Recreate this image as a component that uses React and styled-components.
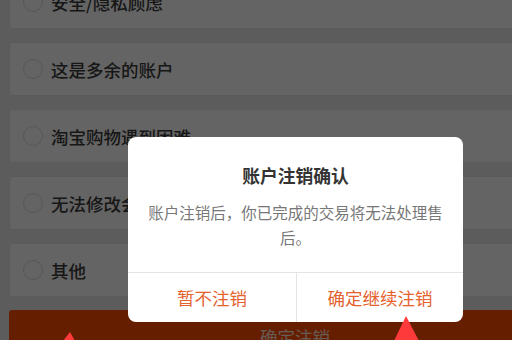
import React from "react";
import styled, { createGlobalStyle } from "styled-components";

const GlobalStyle = createGlobalStyle`
  html, body {
    margin: 0;
    padding: 0;
    width: 512px;
    height: 340px;
    overflow: hidden;
    background: #e6e6e6;
    font-family: "Noto Sans CJK SC", "Noto Sans", sans-serif;
  }
`;

const Page = styled.div`
  position: relative;
  width: 512px;
  height: 340px;
  overflow: hidden;
`;

const List = styled.div`
  display: flex;
  flex-direction: column;
  gap: 13px;
  width: 560px;
  margin-top: -25px;
  padding-left: 9px;
`;

const Card = styled.div`
  display: flex;
  align-items: center;
  gap: 8px;
  height: 54px;
  padding-left: 13px;
  background: #fafafa;
  border: 1px solid #e0e0e0;
  border-radius: 3px;
  box-sizing: border-box;
  font-size: 17.5px;
  font-weight: 500;
  color: #3a3a3a;
`;

const Radio = styled.span`
  width: 18px;
  height: 18px;
  border-radius: 50%;
  border: 1px solid #d8d8d8;
  flex-shrink: 0;
`;

const SubmitBar = styled.div`
  height: 50px;
  background: #ff4c00;
  border-radius: 3px;
  color: rgba(255, 255, 255, 0.85);
  font-size: 17.5px;
  display: flex;
  padding-top: 14px;
  padding-left: 251px;
  box-sizing: border-box;
`;

const Mask = styled.div`
  position: absolute;
  inset: 0;
  background: rgba(0, 0, 0, 0.6);
`;

const Dialog = styled.div`
  position: absolute;
  left: 128px;
  top: 137px;
  width: 335px;
  height: 185px;
  background: #ffffff;
  border-radius: 8px;
  display: flex;
  flex-direction: column;
  overflow: hidden;
`;

const Title = styled.div`
  margin-top: 26px;
  text-align: center;
  font-size: 17.8px;
  line-height: 24px;
  font-weight: bold;
  color: #333333;
`;

const Message = styled.div`
  margin-top: 13px;
  padding: 0 19px;
  text-align: center;
  font-size: 15.5px;
  line-height: 25px;
  color: #777777;
  flex: 1;
`;

const Actions = styled.div`
  display: grid;
  grid-template-columns: 168px 1fr;
  height: 49px;
  border-top: 1px solid #e4e4e4;
`;

const Action = styled.div`
  display: flex;
  align-items: center;
  justify-content: center;
  font-size: 17.5px;
  color: #e4622e;
  padding-bottom: 1px;
  & + & {
    border-left: 1px solid #e4e4e4;
  }
`;

const Arrows = styled.svg`
  position: absolute;
  left: 0;
  top: 0;
`;

const reasons = [
  "安全/隐私顾虑",
  "这是多余的账户",
  "淘宝购物遇到困难",
  "无法修改会员名",
  "其他",
];

export default function App() {
  return (
    <Page>
      <GlobalStyle />
      <List>
        {reasons.map((r) => (
          <Card key={r}>
            <Radio />
            {r}
          </Card>
        ))}
        <SubmitBar>确定注销</SubmitBar>
      </List>
      <Mask />
      <Dialog>
        <Title>账户注销确认</Title>
        <Message>账户注销后，你已完成的交易将无法处理售后。</Message>
        <Actions>
          <Action>暂不注销</Action>
          <Action>确定继续注销</Action>
        </Actions>
      </Dialog>
      <Arrows width="512" height="340" viewBox="0 0 512 340">
        <polygon points="70,332 63,341 75,341" fill="#ff3a3a" />
        <polygon points="406,316 394,341 419,341" fill="#ff3a3a" />
      </Arrows>
    </Page>
  );
}
